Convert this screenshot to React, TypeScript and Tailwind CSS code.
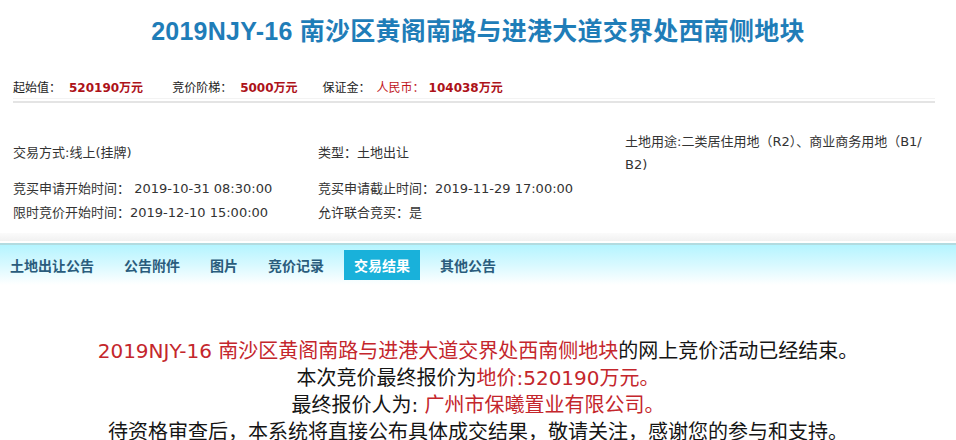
import React from "react";

const red = "text-[#c4262c]";

export default function App() {
  return (
    <div className="w-[956px] h-[440px] overflow-hidden bg-white font-['DejaVu_Sans','Noto_Sans_CJK_SC',sans-serif] text-[#222]">
      {/* Title */}
      <div className="h-16 flex items-center justify-center">
        <h1 className="font-['Liberation_Sans','Noto_Sans_CJK_SC',sans-serif] font-bold text-[25px] text-[#1f7db8] tracking-[0.25px]">
          2019NJY-16 南沙区黄阁南路与进港大道交界处西南侧地块
        </h1>
      </div>

      {/* Price row */}
      <div className="mt-[14px] h-5 flex items-center pl-[13px] text-[12px] leading-5 font-['DejaVu_Sans','Noto_Sans_CJK_SC',sans-serif]">
        <span>起始值：</span>
        <span className="ml-[8px] font-bold text-[#ad1219]">520190万元</span>
        <span className="ml-[29px]">竞价阶梯：</span>
        <span className="ml-[8px] font-bold text-[#ad1219]">5000万元</span>
        <span className="ml-[25px]">保证金：</span>
        <span className="ml-[6px] text-[#c0151c]">人民币：</span>
        <span className="ml-[4px] font-bold text-[#ad1219]">104038万元</span>
      </div>
      <div className="ml-[13px] w-[922px] h-[5px] border-t border-[#f3f3f3] border-b-2 border-b-[#e4e4e4]" />

      {/* Info table */}
      <div className="mt-[26px] pl-[13px] text-[13px] text-[#333] grid grid-cols-[305px_307px_312px]">
        <div className="flex items-center h-[48px]">交易方式:线上(挂牌)</div>
        <div className="flex items-center h-[48px]">类型：土地出让</div>
        <div className="flex flex-col justify-center h-[48px] leading-[23px] whitespace-nowrap">
          <span>土地用途:二类居住用地（R2）、商业商务用地（B1/</span>
          <span>B2)</span>
        </div>
        <div className="h-[24px] leading-[24px] whitespace-nowrap">竞买申请开始时间： 2019-10-31 08:30:00</div>
        <div className="h-[24px] leading-[24px] whitespace-nowrap">竞买申请截止时间：2019-11-29 17:00:00</div>
        <div className="h-[24px]" />
        <div className="h-[24px] leading-[24px] whitespace-nowrap">限时竞价开始时间：2019-12-10 15:00:00</div>
        <div className="h-[24px] leading-[24px] whitespace-nowrap">允许联合竞买：是</div>
        <div className="h-[24px]" />
      </div>

      {/* Tab bar */}
      <div className="mt-[8px] h-[8px] bg-gradient-to-b from-[#fbfbfb] to-[#f1f1f1]" />
      <div className="h-[2px] bg-white" />
      <div className="h-[2px] bg-[#b2dbe0]" />
      <div className="h-[40px] bg-gradient-to-b from-[#b4f4ff] via-[#d8f9ff] to-white pt-[5px]">
        <div className="flex gap-[10px] font-['Noto_Sans_CJK_SC',sans-serif] font-bold text-[14px]">
          {["土地出让公告", "公告附件", "图片", "竞价记录", "交易结果", "其他公告"].map((t) => (
            <div
              key={t}
              className={
                t === "交易结果"
                  ? "h-[30px] px-[10px] flex items-center bg-[#19b1da] text-white"
                  : "h-[30px] px-[10px] flex items-center text-[#2a5c7c]"
              }
            >
              {t}
            </div>
          ))}
        </div>
      </div>

      {/* Result */}
      <div className="pt-[53px] text-center text-[20px] leading-[27px] text-[#151515]">
        <p>
          <span className={red}>2019NJY-16 南沙区黄阁南路与进港大道交界处西南侧地块</span>的网上竞价活动已经结束。
        </p>
        <p>
          本次竞价最终报价为<span className={red}>地价:520190万元。</span>
        </p>
        <p>
          最终报价人为: <span className={red}>广州市保曦置业有限公司。</span>
        </p>
        <p>待资格审查后，本系统将直接公布具体成交结果，敬请关注，感谢您的参与和支持。</p>
      </div>
    </div>
  );
}
